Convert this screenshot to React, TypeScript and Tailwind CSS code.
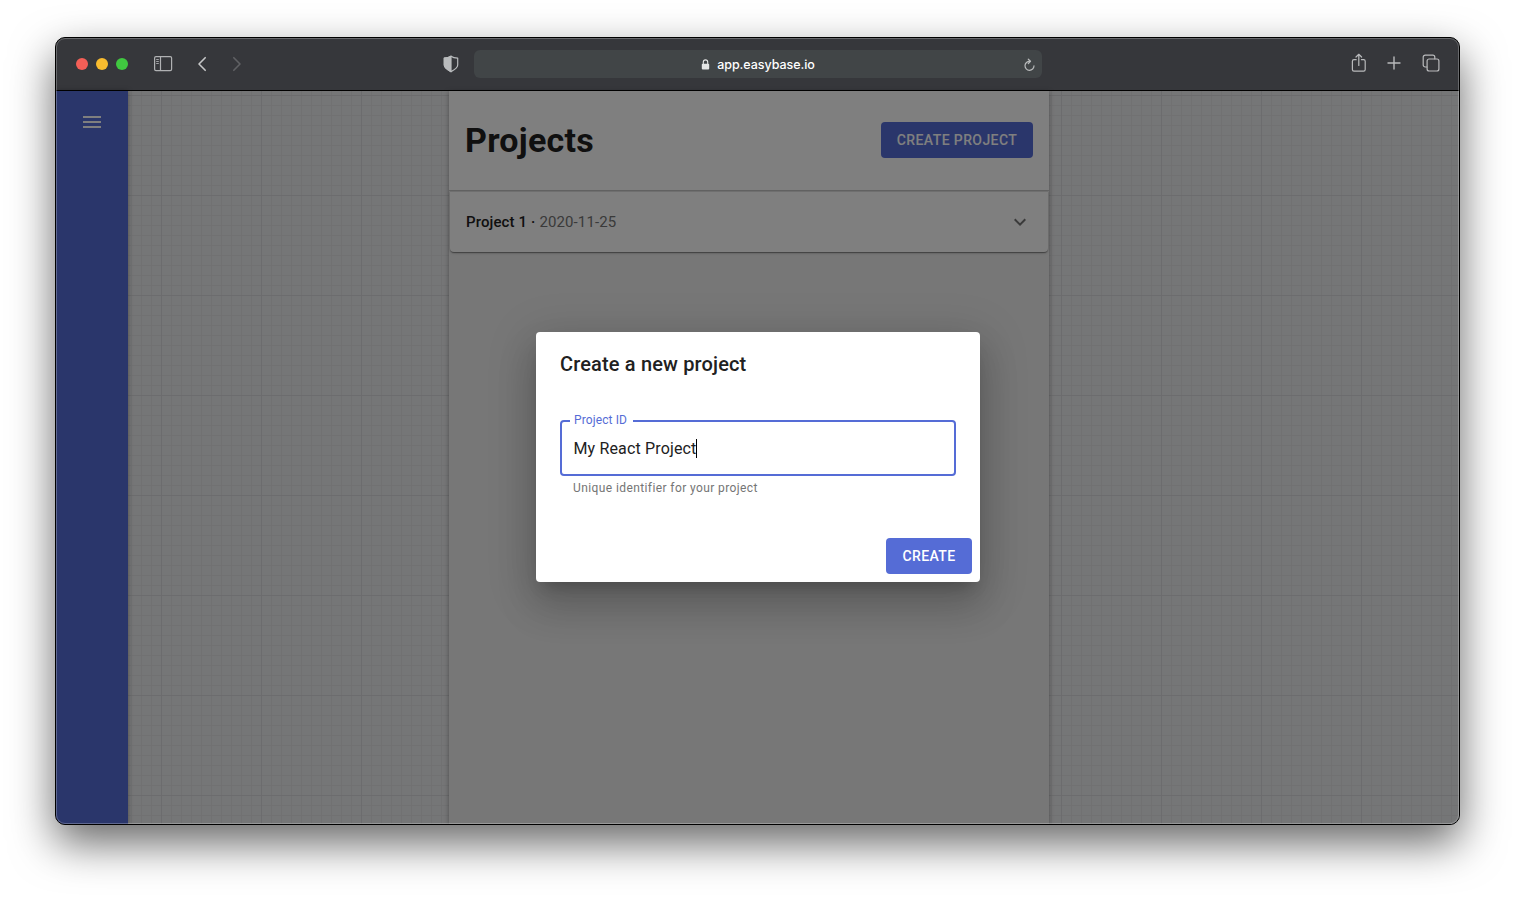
import React from "react";

const stroke = {
  fill: "none",
  stroke: "currentColor",
  strokeLinecap: "round" as const,
  strokeLinejoin: "round" as const,
};

function SidebarIcon() {
  return (
    <svg className="ml-[25px] h-[16px] w-[20px] text-[#b0b1b3]" viewBox="0 0 20 16" {...stroke} strokeWidth="1.2">
      <rect x="1.6" y="0.7" width="17" height="14" rx="1.4" />
      <path d="M7.500 0.900v13.600" />
      <path d="M3.600 3.500h1.800M3.600 5.500h1.800M3.600 7.500h1.800" strokeWidth="0.900" />
    </svg>
  );
}

function ShieldIcon() {
  return (
    <svg className="h-[18px] w-[16px] text-[#b9bbbd]" viewBox="0 0 16 18" {...stroke} strokeWidth="1.2">
      <path d="M8 1.2C6.300 2.400 3.600 3 1.300 3.100V10c0 3 3.600 5 6.700 6.600 3.100-1.600 6.700-3.600 6.700-6.600V3.100C12.400 3 9.700 2.400 8 1.200z" />
      <path d="M8 1.200C6.300 2.400 3.600 3 1.300 3.100V10c0 3 3.600 5 6.700 6.600z" fill="currentColor" />
    </svg>
  );
}

function Toolbar() {
  return (
    <header className="flex h-[53px] shrink-0 items-center border-b border-black bg-[#36373b] pl-[20px] pr-[19px]">
      <div className="flex w-[367px] items-center">
        <div className="flex gap-2">
          <span className="size-3 rounded-full bg-[#f45f57]" />
          <span className="size-3 rounded-full bg-[#f9bc2f]" />
          <span className="size-3 rounded-full bg-[#40c840]" />
        </div>
        <SidebarIcon />
        <svg className="ml-[23px] h-[16px] w-[12px] text-[#c6c7c8]" viewBox="0 0 12 16" {...stroke} strokeWidth="1.6">
          <path d="M9.200 1.700 3 8l6.200 6.300" />
        </svg>
        <svg className="ml-[23px] h-[16px] w-[12px] text-[#606164]" viewBox="0 0 12 16" {...stroke} strokeWidth="1.6">
          <path d="M2.800 1.700 9 8l-6.200 6.300" />
        </svg>
      </div>
      <ShieldIcon />
      <span className="w-[15px] shrink-0" />
      <div className="flex h-[28px] w-[568px] items-center rounded-[6px] bg-[#414547] pr-[6px]">
        <div className="flex flex-1 items-center justify-center pl-[19px]">
          <svg className="mt-px h-[11px] w-[9px] text-[#e4e5e5]" viewBox="0 0 9 11">
            <rect x="0.800" y="4.800" width="7.400" height="5.700" rx="1" fill="currentColor" />
            <path d="M2.300 5V3.100a2.200 2.200 0 0 1 4.400 0V5" fill="none" stroke="currentColor" strokeWidth="1.100" />
          </svg>
          <span className="ml-[7px] mt-px whitespace-nowrap font-['Inter',sans-serif] text-[12.5px] font-medium leading-4 tracking-[-0.05px] text-white">
            app.easybase.io
          </span>
        </div>
        <svg className="mt-[2px] h-[14px] w-[13px] text-[#b9bbbc]" viewBox="0 0 13 14" {...stroke} strokeWidth="1.200">
          <path d="M6.800 3.300A4.500 4.500 0 1 0 11 7.800" />
          <path d="M5.300 1.200 7.500 3.300 5.300 5.500" />
        </svg>
      </div>
      <div className="mb-[2px] ml-auto flex items-center text-[#b9babc]">
        <svg className="h-[20px] w-[16px]" viewBox="0 0 16 20" {...stroke} strokeWidth="1.200">
          <path d="M5.200 6.700H3a1.600 1.600 0 0 0-1.600 1.600v8.300A1.600 1.600 0 0 0 3 18.200h9.600a1.600 1.600 0 0 0 1.600-1.600V8.300a1.600 1.600 0 0 0-1.600-1.600h-2.200" />
          <path d="M7.800 12.500V1.500M5 4l2.800-2.700L10.600 4" />
        </svg>
        <svg className="ml-[20px] h-[14px] w-[14px]" viewBox="0 0 14 14" {...stroke} strokeWidth="1.400">
          <path d="M7 1v12M1 7h12" />
        </svg>
        <svg className="ml-[21px] h-[18px] w-[18px]" viewBox="0 0 18 18" {...stroke} strokeWidth="1.200">
          <rect x="5.100" y="5" width="11.800" height="12" rx="2" />
          <path d="M4.900 13H3.200a2 2 0 0 1-2-2V3.200a2 2 0 0 1 2-2h7.600a2 2 0 0 1 2 2v1.600" />
        </svg>
      </div>
    </header>
  );
}

function ProjectsPanel() {
  return (
    <section className="ml-[321px] flex w-[600px] flex-col bg-[#eeeeee] shadow-[0_1px_5px_rgba(0,0,0,0.35)]">
      <div className="flex h-[99px] items-center justify-between bg-white px-4 pb-[2px]">
        <h1 className="text-[34px] font-bold leading-[42px] tracking-[0.00735em] text-[#212121]">Projects</h1>
        <button className="h-9 w-[152px] rounded-[4px] bg-[#556cd6] text-[14px] font-medium leading-6 tracking-[0.02857em] text-white">
          CREATE PROJECT
        </button>
      </div>
      <div className="h-px bg-[#c8c8c8]" />
      <div className="mx-px flex h-[61px] items-center rounded-b-[4px] border-t border-[#dedede] bg-white pl-4 pr-[16px] text-[15px] tracking-[0.008em] shadow-[0_2px_1px_-1px_rgba(0,0,0,0.2),0_1px_1px_0_rgba(0,0,0,0.2),0_1px_3px_0_rgba(0,0,0,0.2)]">
        <span className="font-medium text-[#212121]">Project 1 ·</span>
        <span className="ml-1 text-[#757575]">2020-11-25</span>
        <svg className="ml-auto size-6 text-[#757575]" viewBox="0 0 24 24" fill="currentColor">
          <path d="M16.590 8.590 12 13.170 7.410 8.590 6 10l6 6 6-6z" />
        </svg>
      </div>
    </section>
  );
}

function CreateDialog() {
  return (
    <div
      role="dialog"
      className="mb-[1px] ml-[1px] flex h-[250px] w-[444px] flex-col rounded-[4px] bg-white shadow-[0_11px_15px_-7px_rgba(0,0,0,0.2),0_24px_38px_3px_rgba(0,0,0,0.14),0_9px_46px_8px_rgba(0,0,0,0.12)]"
    >
      <h2 className="px-6 pt-4 text-[20px] font-medium leading-8 tracking-[0.0075em] text-[#212121]">
        Create a new project
      </h2>
      <div className="px-6 pt-[32px]">
        <fieldset className="h-[64px] rounded-[4px] border-2 border-[#556cd6] pl-2">
          <legend className="h-[17px] w-[63px] whitespace-nowrap pl-[4px] text-[12px] leading-[16px] tracking-[0.00938em] text-[#556cd6]">
            Project ID
          </legend>
          <div className="flex h-[39px] items-center pl-[3.500px] text-[16px] tracking-[0.00938em] text-[#212121]">
            My React Project
            <span className="h-[19px] w-px bg-black" />
          </div>
        </fieldset>
        <p className="pl-[13px] pt-[2px] text-[12px] leading-[20px] tracking-[0.03333em] text-[#757575]">
          Unique identifier for your project
        </p>
      </div>
      <div className="mt-auto flex justify-end p-2">
        <button className="h-9 w-[86px] rounded-[4px] bg-[#556cd6] text-[14px] font-medium leading-6 tracking-[0.02857em] text-white">
          CREATE
        </button>
      </div>
    </div>
  );
}

export default function App() {
  return (
    <div className="h-[898px] w-[1515px] overflow-hidden bg-white px-[55px] pt-[37px] font-['Roboto',sans-serif]">
      <div className="relative flex h-[788px] w-[1405px] flex-col overflow-hidden rounded-[10px] border border-black bg-[#36373b] shadow-[0_18px_44px_rgba(0,0,0,0.6)]">
        <Toolbar />
        <main className="relative flex min-h-0 flex-1">
          <aside className="relative z-10 flex w-[72px] shrink-0 justify-center bg-[#556cd6] pt-[19px] shadow-[0_0_5px_rgba(0,0,0,0.35)]">
            <svg className="size-6 text-white" viewBox="0 0 24 24" fill="currentColor">
              <path d="M3 18h18v-2H3v2zm0-5h18v-2H3v2zm0-7v2h18V6H3z" />
            </svg>
          </aside>
          <div className="flex flex-1 bg-[#ebecee] bg-[linear-gradient(#d8d9dc_1px,transparent_1px),linear-gradient(90deg,#d8d9dc_1px,transparent_1px),linear-gradient(#e2e3e5_1px,transparent_1px),linear-gradient(90deg,#e2e3e5_1px,transparent_1px)] bg-[length:100px_100px,100px_100px,10px_10px,10px_10px] bg-[position:33px_4px,33px_4px,3px_4px,3px_4px]">
            <ProjectsPanel />
          </div>
          <div className="absolute inset-0 z-20 flex items-center justify-center bg-black/50">
            <CreateDialog />
          </div>
        </main>
        <div className="pointer-events-none absolute inset-0 z-30 rounded-[9px] border border-white/25" />
      </div>
    </div>
  );
}
